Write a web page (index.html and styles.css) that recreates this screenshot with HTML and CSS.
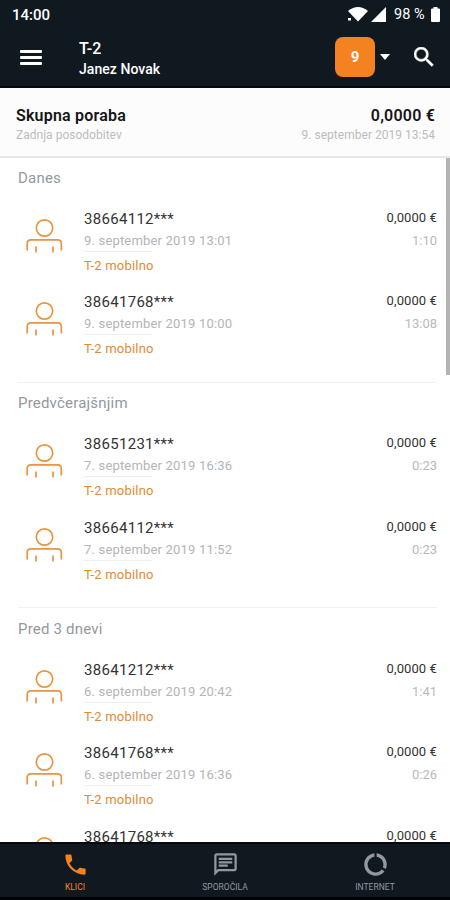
FILE: index.html
```html
<!DOCTYPE html>
<html lang="sl">
<head>
<meta charset="utf-8">
<title>T-2</title>
<link rel="stylesheet" href="styles.css">
</head>
<body>
<svg class="defs" width="0" height="0">
  <symbol id="person" viewBox="0 0 38 38">
    <circle cx="19.500" cy="11" r="8.200"/>
    <path d="M2.200 33.500v-7q0-3.700 3.700-3.700h26.700q3.700 0 3.700 3.700v7M11 29.500v6M28 29.500v6"/>
  </symbol>
</svg>
<div class="app">
  <header class="top">
    <div class="status">
      <span class="clock">14:00</span>
      <svg class="wifi" viewBox="0 0 20 16"><path d="M0 5Q10-3 20 5L10 15.500Z"/><path d="M0 12h3v2.500H0z"/></svg>
      <svg class="signal" viewBox="0 0 15 15"><path d="M15 0v15H0z"/></svg>
      <span class="percent">98 %</span>
      <svg class="battery" viewBox="0 0 9 15"><path d="M2.500 0h4v1.500H8q1 0 1 1V14q0 1-1 1H1q-1 0-1-1V2.500q0-1 1-1h1.500z"/></svg>
    </div>
    <div class="bar">
      <div class="burger"><i></i><i></i><i></i></div>
      <div class="account"><div class="brand">T-2</div><div class="user">Janez Novak</div></div>
      <div class="badge">9</div>
      <svg class="caret" viewBox="0 0 10 6"><path d="M0 0h10L5 6z"/></svg>
      <svg class="search" viewBox="3 3 18 18"><path d="M15.500 14h-.79l-.28-.27A6.471 6.471 0 0 0 16 9.500 6.500 6.500 0 1 0 9.500 16c1.610 0 3.090-.59 4.230-1.570l.27.28v.79l5 4.990L20.490 19l-4.990-5zm-6 0C7.010 14 5 11.990 5 9.500S7.010 5 9.500 5 14 7.010 14 9.500 11.990 14 9.500 14z"/></svg>
    </div>
  </header>
  <section class="summary">
    <div><div class="total">Skupna poraba</div><div class="updated">Zadnja posodobitev</div></div>
    <div class="right"><div class="total amount">0,0000 €</div><div class="updated stamp">9. september 2019 13:54</div></div>
  </section>
  <main class="list">
    <section class="group">
      <h2>Danes</h2>
      <article class="call"><svg class="person"><use href="#person"/></svg><div class="info"><div class="number">38664112***</div><div class="date">9. september 2019 13:01</div><div class="network">T-2 mobilno</div></div><div class="cost"><div class="price">0,0000 €</div><div class="length">1:10</div></div></article>
      <article class="call"><svg class="person"><use href="#person"/></svg><div class="info"><div class="number">38641768***</div><div class="date">9. september 2019 10:00</div><div class="network">T-2 mobilno</div></div><div class="cost"><div class="price">0,0000 €</div><div class="length">13:08</div></div></article>
    </section>
    <section class="group">
      <h2>Predvčerajšnjim</h2>
      <article class="call"><svg class="person"><use href="#person"/></svg><div class="info"><div class="number">38651231***</div><div class="date">7. september 2019 16:36</div><div class="network">T-2 mobilno</div></div><div class="cost"><div class="price">0,0000 €</div><div class="length">0:23</div></div></article>
      <article class="call"><svg class="person"><use href="#person"/></svg><div class="info"><div class="number">38664112***</div><div class="date">7. september 2019 11:52</div><div class="network">T-2 mobilno</div></div><div class="cost"><div class="price">0,0000 €</div><div class="length">0:23</div></div></article>
    </section>
    <section class="group">
      <h2>Pred 3 dnevi</h2>
      <article class="call"><svg class="person"><use href="#person"/></svg><div class="info"><div class="number">38641212***</div><div class="date">6. september 2019 20:42</div><div class="network">T-2 mobilno</div></div><div class="cost"><div class="price">0,0000 €</div><div class="length">1:41</div></div></article>
      <article class="call"><svg class="person"><use href="#person"/></svg><div class="info"><div class="number">38641768***</div><div class="date">6. september 2019 16:36</div><div class="network">T-2 mobilno</div></div><div class="cost"><div class="price">0,0000 €</div><div class="length">0:26</div></div></article>
      <article class="call"><svg class="person"><use href="#person"/></svg><div class="info"><div class="number">38641768***</div></div><div class="cost"><div class="price">0,0000 €</div></div></article>
    </section>
    <div class="thumb"></div>
  </main>
  <nav class="tabs">
    <div class="tab active"><svg viewBox="0 0 24 24"><path d="M6.620 10.790c1.440 2.830 3.760 5.140 6.590 6.590l2.200-2.200c.27-.27.670-.36 1.020-.24 1.120.37 2.330.57 3.570.57.550 0 1 .45 1 1V20c0 .55-.45 1-1 1-9.390 0-17-7.610-17-17 0-.55.450-1 1-1h3.500c.550 0 1 .45 1 1 0 1.250.200 2.450.570 3.570.110.350.030.740-.250 1.020l-2.200 2.200z"/></svg><span>KLICI</span></div>
    <div class="tab"><svg viewBox="0 0 24 24"><path d="M4 4h16v12H5.170L4 17.170V4m0-2c-1.100 0-1.990.9-1.990 2L2 22l4-4h14c1.100 0 2-.9 2-2V4c0-1.100-.9-2-2-2H4zm2 10h8v2H6v-2zm0-3h12v2H6V9zm0-3h12v2H6V6z"/></svg><span>SPOROČILA</span></div>
    <div class="tab"><svg viewBox="0 0 24 24"><path d="M13 2.050v3.030c3.390.49 6 3.390 6 6.920 0 .9-.18 1.750-.48 2.540l2.600 1.530c.560-1.240.880-2.620.880-4.070 0-5.180-3.950-9.450-9-9.950zM12 19c-3.870 0-7-3.130-7-7 0-3.530 2.610-6.430 6-6.920V2.050c-5.060.5-9 4.760-9 9.950 0 5.520 4.470 10 9.990 10 3.310 0 6.240-1.610 8.060-4.090l-2.600-1.530C16.170 17.980 14.210 19 12 19z"/></svg><span>INTERNET</span></div>
  </nav>
</div>
</body>
</html>
```
FILE: styles.css
```css
* { box-sizing: border-box; }
body { margin: 0; font-family: Roboto, sans-serif; background: #fff; }
.defs { position: absolute; }
.app { width: 450px; height: 900px; display: flex; flex-direction: column; overflow: hidden; }
.top { height: 88px; flex: none; background: #111920; color: #fff; border-bottom: 2px solid #08070b; }
.status { height: 28px; display: flex; align-items: center; padding: 0 10px 0 12px; font-weight: 500; }
.status svg { fill: #fff; }
.clock { font-size: 15px; flex: 1; padding-top: 1px; }
.wifi { width: 20px; height: 16px; margin-right: 3px; }
.signal { width: 15px; height: 15px; margin-right: 8px; }
.percent { font-size: 14.5px; width: 33px; white-space: nowrap; margin-right: 4px; font-weight: 400; padding-top: 1px; }
.battery { width: 9px; height: 15px; }
.bar { height: 58px; display: flex; align-items: center; padding: 0 16px 0 20px; }
.burger { width: 22px; margin-right: 37px; display: grid; gap: 3px; }
.burger i { height: 3px; background: #fff; border-radius: 1px; }
.account { flex: 1; font-weight: 500; padding-top: 4px; }
.brand { font-size: 16px; line-height: 20px; }
.user { font-size: 14px; line-height: 20px; letter-spacing: .05px; }
.badge { width: 40px; height: 40px; background: #f58220; border-radius: 8px; text-align: center; font-size: 15px; font-weight: 700; line-height: 41px; margin-right: 5px; }
.caret { width: 10px; height: 6px; fill: #fff; margin-right: 24px; }
.search { width: 20px; height: 20px; fill: #fff; stroke: #fff; stroke-width: .4; }
.summary { height: 70px; flex: none; background: #fcfcfc; border-bottom: 2px solid #e7e7e7; display: flex; justify-content: space-between; padding: 18px 15px 0 16px; }
.total { font-size: 16px; line-height: 20px; font-weight: 600; color: #151515; letter-spacing: .2px; }
.updated { font-size: 12px; line-height: 18px; color: #bdbdbd; letter-spacing: .02px; }
.right { text-align: right; }
.list { flex: 1; overflow: hidden; position: relative; }
.thumb { position: absolute; right: 0; top: -1px; width: 4px; height: 218px; background: #b4b4b4; }
.group { position: relative; height: 225.500px; padding: 0 13px 0 18px; }
.group + .group::before { content: ""; position: absolute; left: 18px; right: 13px; top: -2px; height: 1px; background: #f1f1f1; }
h2 { margin: 0; height: 48.500px; padding-top: 9.500px; line-height: 20px; font-size: 15px; font-weight: 400; color: #92999d; letter-spacing: .2px; }
.call { height: 83.750px; display: flex; }
.person { width: 38px; height: 38px; margin: 10px 21px 0 7px; fill: none; stroke: #e9953f; stroke-width: 1.700; }
.info { flex: 1; }
.number { font-size: 15px; line-height: 24px; color: #333; letter-spacing: .3px; }
.date { font-size: 13px; line-height: 20px; color: #b2b5b7; letter-spacing: .18px; }
.network { font-size: 13px; line-height: 20px; margin-top: 5px; color: #e18a34; position: relative; letter-spacing: .2px; }
.network::before { content: ""; position: absolute; left: 0; top: -5px; width: 68px; height: 1px; background: #efefef; }
.cost { text-align: right; }
.price { font-size: 13px; line-height: 22px; color: #333; letter-spacing: .1px; }
.length { font-size: 13px; line-height: 24px; color: #b9b9b9; }
.tabs { height: 58px; flex: none; background: #111920; border-top: 2px solid #07090d; border-bottom: 3px solid #000; display: grid; grid-template-columns: repeat(3, 1fr); }
.tab { display: flex; flex-direction: column; align-items: center; color: #94979c; fill: currentColor; padding-top: 7px; }
.tab svg { width: 27px; height: 27px; }
.tab span { font-size: 8.500px; line-height: 14px; margin-top: 2px; }
.tab.active { color: #f58220; }
```
